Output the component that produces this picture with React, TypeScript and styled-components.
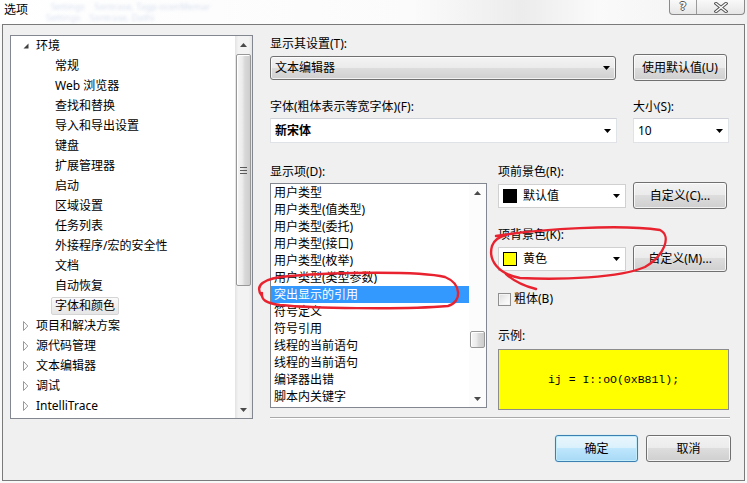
import React from "react";
import styled, { createGlobalStyle, css } from "styled-components";

const GlobalStyle = createGlobalStyle`
  html, body { margin: 0; padding: 0; background: #ffffff; }
  body {
    font-family: "Noto Sans", "Noto Sans CJK SC", sans-serif;
    font-size: 12px;
    color: #000;
  }
  * { box-sizing: border-box; }
`;

const Window = styled.div`
  position: relative;
  width: 747px;
  height: 483px;
  overflow: hidden;
  background: #f8f8f8;
`;

/* ---------- title bar ---------- */
const TitleBar = styled.div`
  position: relative;
  height: 24px;
  display: flex;
  align-items: flex-start;
  background: linear-gradient(
    90deg,
    #ffffff 0%,
    #fbfbfb 55%,
    #ececec 70%,
    #fafafa 80%,
    #f1f1f1 100%
  );
`;

const Title = styled.div`
  position: relative;
  z-index: 1;
  padding: 2px 0 0 4px;
  font-size: 12px;
  line-height: 16px;
`;

const GhostText = styled.div`
  position: absolute;
  top: 1px;
  left: 46px;
  font-size: 9px;
  line-height: 11px;
  white-space: pre;
  color: rgba(80, 120, 185, 0.22);
  filter: blur(1.5px);
`;

const CaptionButtons = styled.div`
  margin-left: auto;
  margin-right: 2px;
  display: flex;
  height: 15px;
  border: 1px solid #8a8a8a;
  border-top: none;
  border-radius: 0 0 4px 4px;
  overflow: hidden;
  background: linear-gradient(#f9f9f9, #e6e6e6);
`;

const CaptionButton = styled.div<{ $w: number; $divider?: boolean }>`
  width: ${(p) => p.$w}px;
  height: 100%;
  display: flex;
  align-items: center;
  justify-content: center;
  ${(p) =>
    p.$divider &&
    css`
      border-right: 1px solid #9a9a9a;
    `}
`;

const HelpGlyph = styled.span`
  font-family: "DejaVu Sans", sans-serif;
  font-size: 11px;
  font-weight: bold;
  line-height: 12px;
  color: #ffffff;
  text-shadow: 1px 0 0 #555, -1px 0 0 #555, 0 1px 0 #555, 0 -1px 0 #555;
`;

/* ---------- dialog frame ---------- */
const Frame = styled.div`
  margin-left: 2px;
  width: 743px;
  height: 457px;
  border: 1px solid #7a7a7a;
  background: #f0f0f0;
  display: grid;
  grid-template-columns: 243px 461px;
  column-gap: 17px;
  align-items: start;
  padding: 10px 0 0 7px;
`;

/* ---------- tree ---------- */
const Tree = styled.div`
  height: 384px;
  border: 1px solid #828790;
  background: #ffffff;
  display: flex;
`;

const TreeBody = styled.div`
  flex: 1;
  display: flex;
  flex-direction: column;
  overflow: hidden;
`;

const TreeRow = styled.div<{ $level: number }>`
  height: 20px;
  flex: none;
  display: flex;
  align-items: center;
  padding-left: ${(p) => (p.$level === 0 ? 12 : 40)}px;
  white-space: nowrap;
`;

const Expander = styled.span`
  width: 9px;
  height: 20px;
  display: flex;
  align-items: center;
`;

const TreeLabel = styled.span<{ $selected?: boolean }>`
  height: 18px;
  line-height: 16px;
  padding: 0 3px;
  border: 1px solid transparent;
  border-radius: 2px;
  ${(p) =>
    p.$selected &&
    css`
      border-color: #d5d5d5;
      background: linear-gradient(#fbfbfb, #e6e6e6);
    `}
`;

/* ---------- scrollbars ---------- */
const VScroll = styled.div<{ $track: string }>`
  width: 17px;
  flex: none;
  display: flex;
  flex-direction: column;
  background: ${(p) => p.$track};
`;

const ScrollArrow = styled.div`
  height: 17px;
  flex: none;
  display: flex;
  align-items: center;
  justify-content: center;
`;

const ScrollTrack = styled.div`
  flex: 1;
  display: flex;
  flex-direction: column;
`;

const Thumb = styled.div<{ $top: number; $h: number }>`
  margin: ${(p) => p.$top}px 1px 0 1px;
  height: ${(p) => p.$h}px;
  border: 1px solid #989898;
  border-radius: 2px;
  background: linear-gradient(90deg, #f6f6f6 0%, #ececec 40%, #d9d9d9 60%, #cdcdcd 100%);
  box-shadow: inset 1px 1px 0 #ffffff;
  display: flex;
  align-items: center;
  justify-content: center;
`;

const Grip = styled.div`
  width: 7px;
  height: 7px;
  background: repeating-linear-gradient(
    180deg,
    #5a5a5a 0px,
    #5a5a5a 1px,
    transparent 1px,
    transparent 3px
  );
`;

/* ---------- right pane ---------- */
const RightPane = styled.div`
  display: flex;
  flex-direction: column;
`;

const Label = styled.div<{ $mt?: number; $w?: number }>`
  margin-top: ${(p) => p.$mt ?? 0}px;
  ${(p) =>
    p.$w !== undefined &&
    css`
      width: ${p.$w}px;
      flex: none;
    `}
  height: 16px;
  line-height: 16px;
  white-space: nowrap;
`;

const Row = styled.div<{ $mt?: number; $gap?: number; $h?: number }>`
  margin-top: ${(p) => p.$mt ?? 0}px;
  display: flex;
  align-items: center;
  gap: ${(p) => p.$gap ?? 0}px;
  ${(p) =>
    p.$h !== undefined &&
    css`
      height: ${p.$h}px;
    `}
`;

type ComboKind = "button" | "edit" | "plain";

const Combo = styled.div<{ $w: number; $h: number; $kind: ComboKind }>`
  width: ${(p) => p.$w}px;
  height: ${(p) => p.$h}px;
  flex: none;
  display: flex;
  align-items: center;
  padding: 0 5px 0 4px;
  line-height: 16px;
  white-space: nowrap;
  ${(p) =>
    p.$kind === "button"
      ? css`
          border: 1px solid #707070;
          border-radius: 3px;
          background: linear-gradient(#f3f3f3 0%, #ebebeb 50%, #dddddd 50%, #d0d0d0 100%);
          box-shadow: inset 0 0 0 1px rgba(255, 255, 255, 0.7);
        `
      : p.$kind === "edit"
      ? css`
          border: 1px solid #dfe3e8;
          border-top-color: #cfd3d9;
          background: #ffffff;
        `
      : css`
          border: 1px solid #d0d0d0;
          background: #ffffff;
        `}
`;

const ComboText = styled.span<{ $bold?: boolean }>`
  flex: 1;
  font-weight: ${(p) => (p.$bold ? 700 : 400)};
`;

const Swatch = styled.span<{ $color: string }>`
  width: 14px;
  height: 14px;
  flex: none;
  border: 1px solid #000;
  background: ${(p) => p.$color};
  margin-right: 6px;
`;

const Button = styled.div<{ $w: number; $primary?: boolean }>`
  width: ${(p) => p.$w}px;
  height: 27px;
  flex: none;
  display: flex;
  align-items: center;
  justify-content: center;
  line-height: 16px;
  border-radius: 3px;
  white-space: nowrap;
  ${(p) =>
    p.$primary
      ? css`
          border: 1px solid #3c7fb1;
          background: linear-gradient(#eaf6fd 0%, #d9f0fc 50%, #bee6fd 50%, #a7d9f5 100%);
          box-shadow: inset 0 0 0 1px #c3ecfb, 0 0 1px #7ecbf1;
        `
      : css`
          border: 1px solid #707070;
          background: linear-gradient(#f2f2f2 0%, #ebebeb 50%, #dddddd 50%, #cfcfcf 100%);
          box-shadow: inset 0 0 0 1px rgba(255, 255, 255, 0.75);
        `}
`;

const BottomGrid = styled.div`
  margin-top: 21px;
  display: grid;
  grid-template-columns: 217px 233px;
  column-gap: 11px;
  align-items: start;
`;

const Column = styled.div`
  display: flex;
  flex-direction: column;
`;

const ListBox = styled.div`
  margin-top: 3px;
  width: 217px;
  height: 225px;
  border: 1px solid #828790;
  background: #ffffff;
  display: flex;
`;

const ListBody = styled.div`
  flex: 1;
  display: flex;
  flex-direction: column;
  overflow: hidden;
`;

const ListItem = styled.div<{ $selected?: boolean }>`
  height: 17px;
  flex: none;
  line-height: 17px;
  padding-left: 3px;
  white-space: nowrap;
  ${(p) =>
    p.$selected &&
    css`
      background: #3399ff;
      color: #ffffff;
    `}
`;

const CheckRow = styled.div`
  margin-top: 19px;
  height: 16px;
  display: flex;
  align-items: center;
  gap: 3px;
  line-height: 16px;
`;

const CheckBox = styled.span`
  width: 13px;
  height: 13px;
  border: 1px solid #8f8f8f;
  background: linear-gradient(135deg, #dcdcdc 0%, #f4f4f4 60%, #ffffff 100%);
  box-shadow: inset 0 0 0 1px #f4f4f4;
`;

const Sample = styled.div`
  margin-top: 5px;
  width: 231px;
  height: 61px;
  border: 1px solid #8c8c8c;
  background: #ffff00;
  display: flex;
  align-items: center;
  justify-content: center;
  font-family: "Liberation Mono", monospace;
  font-size: 11.5px;
  white-space: pre;
`;

const Separator = styled.div`
  margin-top: 7px;
  width: 460px;
  height: 2px;
  border-top: 1px solid #a9a9a9;
  border-bottom: 1px solid #ffffff;
`;

const ButtonRow = styled.div`
  margin-top: 16px;
  display: flex;
  justify-content: flex-end;
  gap: 8px;
`;

const Annotations = styled.svg`
  position: absolute;
  left: 0;
  top: 0;
  pointer-events: none;
  z-index: 5;
`;

/* ---------- small drawings ---------- */
const DownArrow = () => (
  <svg width="7" height="4" viewBox="0 0 7 4">
    <polygon points="0,0 7,0 3.5,4" fill="#000" />
  </svg>
);

const ScrollUp = () => (
  <svg width="7" height="4" viewBox="0 0 7 4">
    <polygon points="0,4 7,4 3.5,0" fill="#4a4a4a" />
  </svg>
);

const ScrollDown = () => (
  <svg width="7" height="4" viewBox="0 0 7 4">
    <polygon points="0,0 7,0 3.5,4" fill="#4a4a4a" />
  </svg>
);

const ExpandedIcon = () => (
  <svg width="6" height="6" viewBox="0 0 6 6">
    <polygon points="5.5,0.5 5.5,5.5 0.5,5.5" fill="#404040" />
  </svg>
);

const CollapsedIcon = () => (
  <svg width="6" height="10" viewBox="0 0 6 10">
    <polygon points="0.5,0.5 4.8,5 0.5,9.5" fill="#ffffff" stroke="#9a9a9a" strokeWidth="1" />
  </svg>
);

const CloseGlyph = () => (
  <svg width="14" height="11" viewBox="0 0 14 11">
    <path d="M2 1.5 L12 9.5 M12 1.5 L2 9.5" stroke="#555" strokeWidth="3.4" strokeLinecap="square" />
    <path d="M2 1.5 L12 9.5 M12 1.5 L2 9.5" stroke="#ffffff" strokeWidth="1.4" strokeLinecap="square" />
  </svg>
);

/* ---------- data ---------- */
const envChildren = [
  "常规",
  "Web 浏览器",
  "查找和替换",
  "导入和导出设置",
  "键盘",
  "扩展管理器",
  "启动",
  "区域设置",
  "任务列表",
  "外接程序/宏的安全性",
  "文档",
  "自动恢复",
  "字体和颜色",
];

const topLevel = ["项目和解决方案", "源代码管理", "文本编辑器", "调试", "IntelliTrace"];

const displayItems = [
  "用户类型",
  "用户类型(值类型)",
  "用户类型(委托)",
  "用户类型(接口)",
  "用户类型(枚举)",
  "用户类型(类型参数)",
  "突出显示的引用",
  "符号定义",
  "符号引用",
  "线程的当前语句",
  "线程的当前语句",
  "编译器出错",
  "脚本内关键字",
];

export default function App() {
  return (
    <Window>
      <GlobalStyle />
      <TitleBar>
        <GhostText>{"  Settings    Sontrase, Tagp-ocenMemar\nSettings    Sontrase, Dathi"}</GhostText>
        <Title>选项</Title>
        <CaptionButtons>
          <CaptionButton $w={27} $divider>
            <HelpGlyph>?</HelpGlyph>
          </CaptionButton>
          <CaptionButton $w={47}>
            <CloseGlyph />
          </CaptionButton>
        </CaptionButtons>
      </TitleBar>

      <Frame>
        <Tree>
          <TreeBody>
            <TreeRow $level={0}>
              <Expander>
                <ExpandedIcon />
              </Expander>
              <TreeLabel>环境</TreeLabel>
            </TreeRow>
            {envChildren.map((t) => (
              <TreeRow key={t} $level={1}>
                <TreeLabel $selected={t === "字体和颜色"}>{t}</TreeLabel>
              </TreeRow>
            ))}
            {topLevel.map((t) => (
              <TreeRow key={t} $level={0}>
                <Expander>
                  <CollapsedIcon />
                </Expander>
                <TreeLabel>{t}</TreeLabel>
              </TreeRow>
            ))}
          </TreeBody>
          <VScroll $track="linear-gradient(90deg, #e3e3e3 0%, #f3f3f3 20%, #f3f3f3 80%, #e6e6e6 100%)">
            <ScrollArrow>
              <ScrollUp />
            </ScrollArrow>
            <ScrollTrack>
              <Thumb $top={1} $h={232}>
                <Grip />
              </Thumb>
            </ScrollTrack>
            <ScrollArrow>
              <ScrollDown />
            </ScrollArrow>
          </VScroll>
        </Tree>

        <RightPane>
          <Label $mt={1}>显示其设置(T):</Label>
          <Row $mt={2} $gap={17} $h={27}>
            <Combo $w={346} $h={24} $kind="button">
              <ComboText>文本编辑器</ComboText>
              <DownArrow />
            </Combo>
            <Button $w={94}>使用默认值(U)</Button>
          </Row>

          <Row $mt={18}>
            <Label $w={363}>字体(粗体表示等宽字体)(F):</Label>
            <Label>大小(S):</Label>
          </Row>
          <Row $mt={3} $gap={16}>
            <Combo $w={347} $h={25} $kind="edit">
              <ComboText $bold>新宋体</ComboText>
              <DownArrow />
            </Combo>
            <Combo $w={96} $h={25} $kind="edit">
              <ComboText>10</ComboText>
              <DownArrow />
            </Combo>
          </Row>

          <BottomGrid>
            <Column>
              <Label>显示项(D):</Label>
              <ListBox>
                <ListBody>
                  {displayItems.map((t, i) => (
                    <ListItem key={i} $selected={i === 6}>
                      {t}
                    </ListItem>
                  ))}
                </ListBody>
                <VScroll $track="#fcfcfc">
                  <ScrollArrow>
                    <ScrollUp />
                  </ScrollArrow>
                  <ScrollTrack>
                    <Thumb $top={130} $h={17} />
                  </ScrollTrack>
                  <ScrollArrow>
                    <ScrollDown />
                  </ScrollArrow>
                </VScroll>
              </ListBox>
            </Column>

            <Column>
              <Label>项前景色(R):</Label>
              <Row $mt={2} $gap={7} $h={27}>
                <Combo $w={128} $h={24} $kind="plain">
                  <Swatch $color="#000000" />
                  <ComboText>默认值</ComboText>
                  <DownArrow />
                </Combo>
                <Button $w={94}>自定义(C)...</Button>
              </Row>
              <Label $mt={18}>项背景色(K):</Label>
              <Row $mt={2} $gap={7} $h={27}>
                <Combo $w={128} $h={24} $kind="plain">
                  <Swatch $color="#ffff00" />
                  <ComboText>黄色</ComboText>
                  <DownArrow />
                </Combo>
                <Button $w={94}>自定义(M)...</Button>
              </Row>
              <CheckRow>
                <CheckBox />
                <span>粗体(B)</span>
              </CheckRow>
              <Label $mt={21}>示例:</Label>
              <Sample>{"ij = I::oO(0xB81l);"}</Sample>
            </Column>
          </BottomGrid>

          <Separator />
          <ButtonRow>
            <Button $w={83} $primary>
              确定
            </Button>
            <Button $w={85}>取消</Button>
          </ButtonRow>
        </RightPane>
      </Frame>

      <Annotations width="747" height="483" viewBox="0 0 747 483">
        <g fill="none" stroke="#e8232f" strokeWidth="2.4" strokeLinecap="round" strokeLinejoin="round">
          <path d="M262 296 C254 286, 262 278, 290 276 C340 272, 420 271, 445 277 C462 284, 462 302, 448 306 C400 310, 310 308, 280 305 C266 303, 261 300, 262 293" />
          <path d="M496 236 C540 229, 620 224, 660 230 C672 236, 664 256, 645 267 C620 278, 560 280, 520 278 C498 274, 488 260, 492 246 C494 240, 498 237, 506 235" />
          <path d="M506 274 C515 282, 524 286, 536 289" />
        </g>
      </Annotations>
    </Window>
  );
}
